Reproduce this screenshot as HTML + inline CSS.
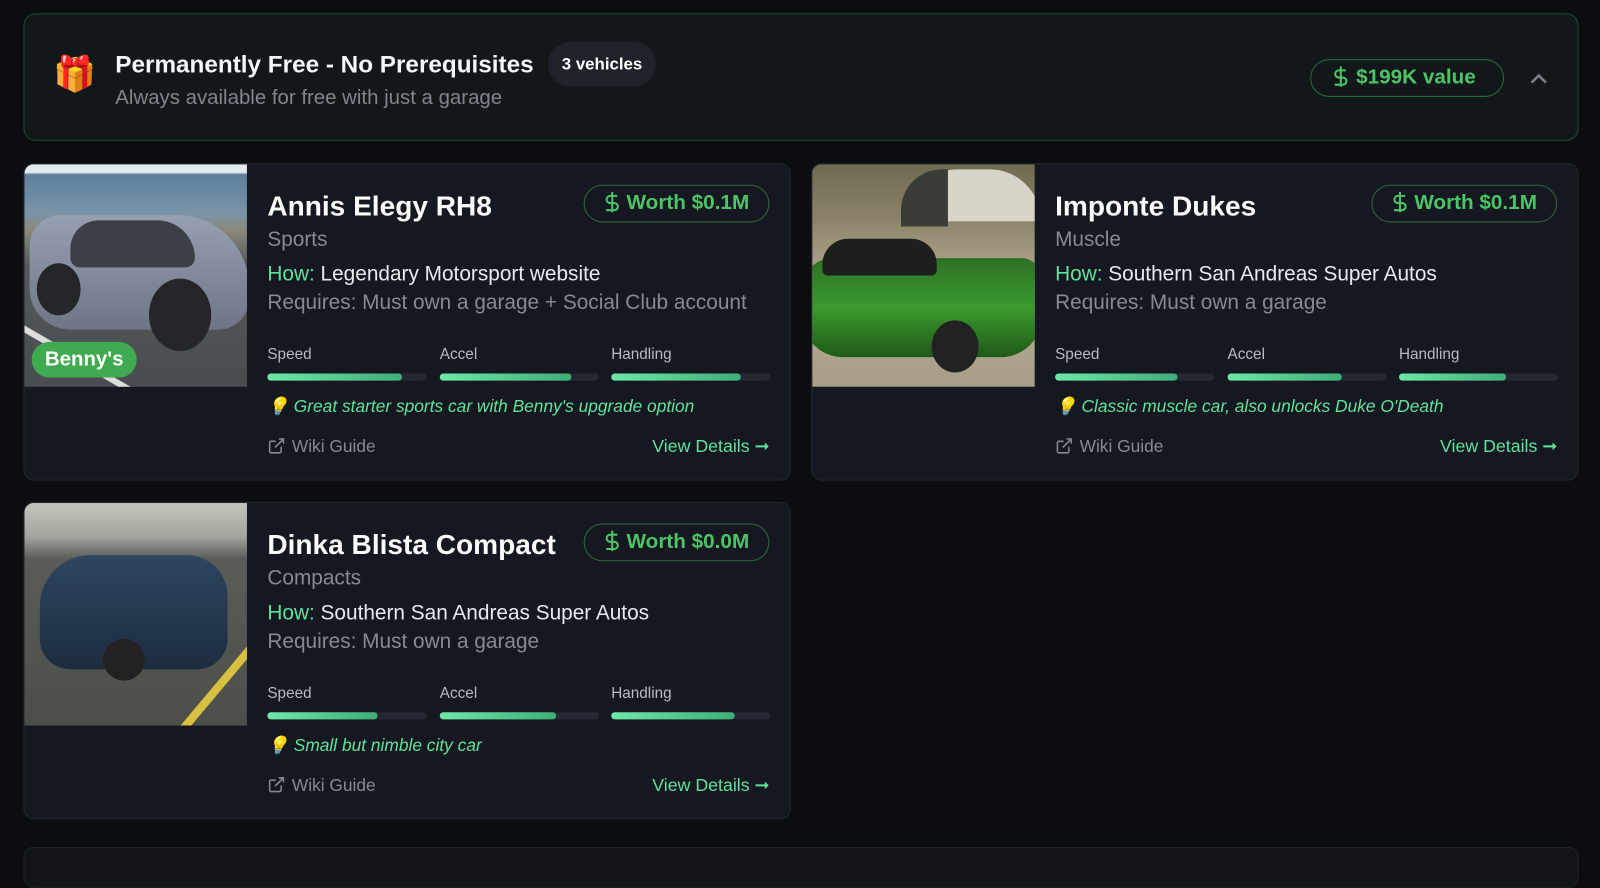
<!DOCTYPE html>
<html><head><meta charset="utf-8"><style>
*{box-sizing:border-box;margin:0;padding:0}
body{width:1600px;height:851px;background:#0c0d10;font-family:"Liberation Sans",sans-serif;overflow:hidden;position:relative;color:#fff}
#w{position:absolute;left:0;top:0;width:1568px;height:834px;transform:scale(1.0204);transform-origin:0 0}
.hdr{position:absolute;left:23px;top:13px;width:1524px;height:125px;background:#12171a;border:1px solid #1f4a30;border-radius:12px}
.gift{position:absolute;left:28px;top:39px;font-size:34px}
.ht{position:absolute;left:89px;top:36px;font-size:23.8px;font-weight:bold;color:#f2f7f7}
.hs{position:absolute;left:89px;top:71px;font-size:20px;color:#80858f}
.cnt{position:absolute;left:513px;top:27px;height:44px;width:106px;border-radius:22px;background:#1e222b;font-size:16.5px;font-weight:bold;text-align:center;line-height:44px}
.val{position:absolute;left:1260px;top:44px;width:190px;height:37px;border:1px solid #2b6a3c;border-radius:19px;color:#4cc465;font-weight:bold;font-size:20.3px;line-height:35px;padding-left:22px}
.val svg{vertical-align:-4px;margin-right:8px}
.chev{position:absolute;left:1474px;top:57px}
.card{position:absolute;width:752px;height:311px;background:#151821;border:1px solid #22262f;border-radius:10px;overflow:hidden}
.img{position:absolute;left:0;top:0;width:218px;height:218px;overflow:hidden}
.t{position:absolute;left:238px;top:25px;font-size:27.5px;font-weight:bold;color:#fafafa}
.cat{position:absolute;left:238px;top:63px;font-size:20.4px;color:#858a94}
.how{position:absolute;left:238px;top:97px;font-size:20.4px;color:#e8eaee}
.how b{font-weight:normal;color:#5fe39a}
.req{position:absolute;left:238px;top:125px;font-size:20.4px;color:#858a94}
.worth{position:absolute;left:548px;top:20px;width:182px;height:37px;border:1px solid #2b6a3c;border-radius:19px;color:#4cc465;font-weight:bold;font-size:20.3px;line-height:35px;padding-left:20px}
.worth svg{vertical-align:-4px;margin-right:7px}
.st{position:absolute;top:178px;font-size:15px;color:#b7bbc3}
.bar{position:absolute;top:205px;width:156px;height:7px;border-radius:4px;background:#242833}
.bar i{display:block;height:7px;border-radius:4px;background:linear-gradient(90deg,#6ee7a6,#3fae78)}
.tip{position:absolute;left:238px;top:228px;font-size:17px;font-style:italic;color:#5fe39a}
.wiki{position:absolute;left:238px;top:267px;font-size:17px;color:#858a94}
.wiki svg{vertical-align:-3px;margin-right:6px}
.vd{position:absolute;right:20px;top:266px;font-size:17.4px;color:#5fe39a}
.benny{position:absolute;left:7px;top:174px;background:#3faa4f;color:#fff;font-weight:bold;font-size:20px;padding:6px 13px;border-radius:18px}
</style></head><body><div id="w">
<div class="hdr">
<div class="gift">🎁</div>
<div class="ht">Permanently Free - No Prerequisites</div>
<div class="hs">Always available for free with just a garage</div>
<div class="cnt">3 vehicles</div>
<div class="val"><svg width="14" height="22" viewBox="0 0 14 22" fill="none" stroke="#4cc465" stroke-width="2"><path d="M7 1v20M12 5H5a3.5 3.5 0 0 0 0 7h4a3.5 3.5 0 0 1 0 7H1"/></svg>$199K value</div>
<svg class="chev" width="20" height="12" viewBox="0 0 20 12" fill="none" stroke="#7c818b" stroke-width="2.5"><path d="M3 10l7-7 7 7"/></svg>
</div>

<div class="card" style="left:23px;top:160px">
<div class="img" style="background:linear-gradient(180deg,#e2eaf0 0,#e2eaf0 8px,#5d7f9c 10px,#7a94a8 22%,#8a8878 30%,#55585a 45%,#4a4d50 100%)">
<div style="position:absolute;left:5px;top:50px;width:215px;height:112px;border-radius:30px 70px 30px 40px;background:linear-gradient(180deg,#97a0b0,#6e7686)"></div>
<div style="position:absolute;left:45px;top:55px;width:122px;height:46px;border-radius:30px 40px 10px 10px;background:#3a3f48"></div>
<div style="position:absolute;left:12px;top:97px;width:43px;height:51px;border-radius:50%;background:#24262a"></div>
<div style="position:absolute;left:122px;top:112px;width:61px;height:71px;border-radius:50%;background:#24262a"></div>
<div style="position:absolute;left:0;top:158px;width:222px;height:6px;background:#ddd;transform:rotate(30deg);transform-origin:0 0"></div>
<div class="benny">Benny's</div></div>
<div class="t">Annis Elegy RH8</div>
<div class="worth"><svg width="14" height="22" viewBox="0 0 14 22" fill="none" stroke="#4cc465" stroke-width="2"><path d="M7 1v20M12 5H5a3.5 3.5 0 0 0 0 7h4a3.5 3.5 0 0 1 0 7H1"/></svg>Worth $0.1M</div>
<div class="cat">Sports</div>
<div class="how"><b>How:</b> Legendary Motorsport website</div>
<div class="req">Requires: Must own a garage + Social Club account</div>
<div class="st" style="left:238px">Speed</div><div class="st" style="left:407px">Accel</div><div class="st" style="left:575px">Handling</div>
<div class="bar" style="left:238px"><i style="width:132px"></i></div>
<div class="bar" style="left:407px"><i style="width:129px"></i></div>
<div class="bar" style="left:575px"><i style="width:127px"></i></div>
<div class="tip">💡 Great starter sports car with Benny's upgrade option</div>
<div class="wiki"><svg width="18" height="18" viewBox="0 0 24 24" fill="none" stroke="#858a94" stroke-width="2"><path d="M18 13v6a2 2 0 0 1-2 2H5a2 2 0 0 1-2-2V8a2 2 0 0 1 2-2h6M15 3h6v6M10 14L21 3"/></svg>Wiki Guide</div>
<div class="vd">View Details ➞</div>
</div>

<div class="card" style="left:795px;top:160px">
<div class="img" style="background:linear-gradient(180deg,#6e6a50 0,#8c8468 25%,#b8ad94 55%,#a89e88 100%)">
<div style="position:absolute;left:92px;top:5px;width:132px;height:51px;border-radius:50px 50px 0 0;background:#d8d4c8"></div>
<div style="position:absolute;left:87px;top:5px;width:46px;height:56px;border-radius:40px 0 0 0;background:#3a3c38"></div>
<div style="position:absolute;left:-10px;top:92px;width:235px;height:97px;border-radius:30px 20px 40px 40px;background:linear-gradient(180deg,#2e7026,#3a9a2e,#1f5a18)"></div>
<div style="position:absolute;left:10px;top:73px;width:112px;height:36px;border-radius:25px 25px 5px 5px;background:#1c1f1c"></div>
<div style="position:absolute;left:117px;top:153px;width:46px;height:51px;border-radius:50%;background:#222"></div></div>
<div class="t">Imponte Dukes</div>
<div class="worth"><svg width="14" height="22" viewBox="0 0 14 22" fill="none" stroke="#4cc465" stroke-width="2"><path d="M7 1v20M12 5H5a3.5 3.5 0 0 0 0 7h4a3.5 3.5 0 0 1 0 7H1"/></svg>Worth $0.1M</div>
<div class="cat">Muscle</div>
<div class="how"><b>How:</b> Southern San Andreas Super Autos</div>
<div class="req">Requires: Must own a garage</div>
<div class="st" style="left:238px">Speed</div><div class="st" style="left:407px">Accel</div><div class="st" style="left:575px">Handling</div>
<div class="bar" style="left:238px"><i style="width:120px"></i></div>
<div class="bar" style="left:407px"><i style="width:112px"></i></div>
<div class="bar" style="left:575px"><i style="width:105px"></i></div>
<div class="tip">💡 Classic muscle car, also unlocks Duke O'Death</div>
<div class="wiki"><svg width="18" height="18" viewBox="0 0 24 24" fill="none" stroke="#858a94" stroke-width="2"><path d="M18 13v6a2 2 0 0 1-2 2H5a2 2 0 0 1-2-2V8a2 2 0 0 1 2-2h6M15 3h6v6M10 14L21 3"/></svg>Wiki Guide</div>
<div class="vd">View Details ➞</div>
</div>

<div class="card" style="left:23px;top:492px">
<div class="img" style="background:linear-gradient(180deg,#c4c6be 0,#a4a69e 15%,#5a5c58 25%,#4c4e4a 100%)">
<div style="position:absolute;left:15px;top:51px;width:184px;height:112px;border-radius:50px 40px 30px 30px;background:linear-gradient(180deg,#2e4660,#1c2c40)"></div>
<div style="position:absolute;left:77px;top:133px;width:41px;height:41px;border-radius:50%;background:#222"></div>
<div style="position:absolute;left:153px;top:218px;width:102px;height:8px;background:#d8c040;transform:rotate(-50deg);transform-origin:0 0"></div></div>
<div class="t">Dinka Blista Compact</div>
<div class="worth"><svg width="14" height="22" viewBox="0 0 14 22" fill="none" stroke="#4cc465" stroke-width="2"><path d="M7 1v20M12 5H5a3.5 3.5 0 0 0 0 7h4a3.5 3.5 0 0 1 0 7H1"/></svg>Worth $0.0M</div>
<div class="cat">Compacts</div>
<div class="how"><b>How:</b> Southern San Andreas Super Autos</div>
<div class="req">Requires: Must own a garage</div>
<div class="st" style="left:238px">Speed</div><div class="st" style="left:407px">Accel</div><div class="st" style="left:575px">Handling</div>
<div class="bar" style="left:238px"><i style="width:108px"></i></div>
<div class="bar" style="left:407px"><i style="width:114px"></i></div>
<div class="bar" style="left:575px"><i style="width:121px"></i></div>
<div class="tip">💡 Small but nimble city car</div>
<div class="wiki"><svg width="18" height="18" viewBox="0 0 24 24" fill="none" stroke="#858a94" stroke-width="2"><path d="M18 13v6a2 2 0 0 1-2 2H5a2 2 0 0 1-2-2V8a2 2 0 0 1 2-2h6M15 3h6v6M10 14L21 3"/></svg>Wiki Guide</div>
<div class="vd">View Details ➞</div>
</div>

<div style="position:absolute;left:23px;top:830px;width:1524px;height:40px;background:#121419;border:1px solid #1e222a;border-radius:10px"></div>
</div></body></html>
